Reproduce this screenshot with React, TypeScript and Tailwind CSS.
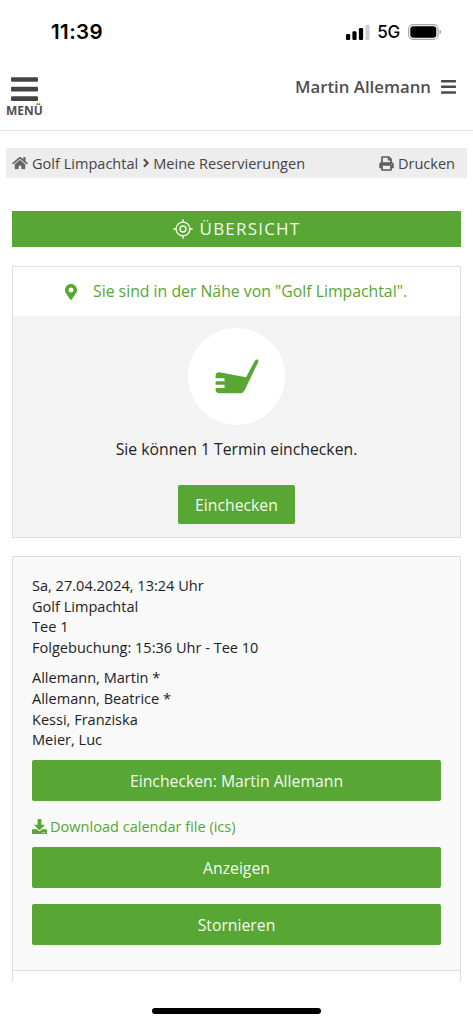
import type { ReactNode } from "react";

function StatusBar() {
  return (
    <div className="flex h-[63px] items-center justify-between pl-[51px] pr-[31px]">
      <span className="font-['Inter'] text-[20.5px] font-semibold leading-6 tracking-[0.4px] text-black">11:39</span>
      <div className="flex items-center">
        <svg className="h-4 w-6" viewBox="0 0 24 16">
          <rect x="0" y="10" width="4.2" height="6" rx="1.2" />
          <rect x="6.4" y="7.2" width="4.2" height="8.8" rx="1.2" />
          <rect x="12.9" y="4" width="4.2" height="12" rx="1.2" />
          <rect x="19.4" y="0.8" width="4.2" height="15.2" rx="1.2" fill="#d0d0d0" />
        </svg>
        <span className="ml-[7px] font-['Inter'] text-[17px] font-medium leading-5 tracking-[-0.2px] text-black">5G</span>
        <svg className="ml-2 h-4 w-[34px]" viewBox="0 0 34 16">
          <rect x="0.7" y="0.6" width="29.4" height="14.8" rx="4.5" fill="none" stroke="#a8a8a8" strokeWidth="1.2" />
          <rect x="2.3" y="2.3" width="26" height="11.4" rx="3" />
          <path d="M31.5 5.6c2.2.7 2.2 4.1 0 4.8z" fill="#a8a8a8" />
        </svg>
      </div>
    </div>
  );
}

function Header() {
  return (
    <header className="flex h-[68px] items-start justify-between border-b border-[#dedede] pl-[6px] pr-[17px] text-[#505050]">
      <div className="flex flex-col items-center pt-[14px]">
        <svg className="h-6 w-[27px]" viewBox="0 0 27 24" fill="#444">
          <rect x="0" y="0.2" width="27" height="4.6" rx="1" />
          <rect x="0" y="9.8" width="27" height="4.6" rx="1" />
          <rect x="0" y="19.3" width="27" height="4.6" rx="1" />
        </svg>
        <span className="mt-[1px] text-[12px] font-bold leading-[18px]">MENÜ</span>
      </div>
      <div className="flex items-center pt-3">
        <span className="text-[16.8px] font-semibold leading-6">Martin Allemann</span>
        <svg className="ml-[10px] h-[14px] w-[15px]" viewBox="0 0 15 14" fill="#4b4b4b">
          <rect x="0" y="0" width="15" height="2.4" rx="0.4" />
          <rect x="0" y="5.6" width="15" height="2.4" rx="0.4" />
          <rect x="0" y="11.3" width="15" height="2.4" rx="0.4" />
        </svg>
      </div>
    </header>
  );
}

function HomeIcon() {
  return (
    <svg className="h-[14px] w-4" viewBox="0 0 576 512" fill="#666">
      <path d="M280.37 148.26L96 300.11V464a16 16 0 0 0 16 16l112.06-.29a16 16 0 0 0 15.92-16V368a16 16 0 0 1 16-16h64a16 16 0 0 1 16 16v95.64a16 16 0 0 0 16 16.05L464 480a16 16 0 0 0 16-16V300L295.67 148.26a12.19 12.19 0 0 0-15.3 0zM571.6 251.47L488 182.56V44.05a12 12 0 0 0-12-12h-56a12 12 0 0 0-12 12v72.61L318.47 43a48 48 0 0 0-61 0L4.34 251.47a12 12 0 0 0-1.6 16.9l25.5 31A12 12 0 0 0 45.15 301l235.22-193.74a12.19 12.19 0 0 1 15.3 0L530.9 301a12 12 0 0 0 16.9-1.6l25.5-31a12 12 0 0 0-1.7-16.93z" />
    </svg>
  );
}

function PrintIcon() {
  return (
    <svg className="h-[15px] w-[15px]" viewBox="0 0 15 15" fill="none" stroke="#5c5c5c">
      <path d="M3 7V1h6.8L12 3.2V7" strokeWidth="1.7" strokeLinejoin="round" />
      <path d="M9.4 1v2.8H12" strokeWidth="1.2" />
      <path d="M0.3 8.3c0-1.2.8-2 2-2h10.4c1.2 0 2 .8 2 2v3.9H12V9.7H3v2.5H.3z" fill="#5c5c5c" stroke="none" />
      <path d="M3 10v4h9v-4" strokeWidth="1.7" strokeLinejoin="round" />
      <circle cx="12.7" cy="8.3" r="0.55" fill="#eee" stroke="none" />
    </svg>
  );
}

function Breadcrumbs() {
  return (
    <nav className="mx-[6px] mt-[17px] flex h-[30px] items-center bg-[#ededed] pl-[6px] pr-3 text-[14.55px] leading-[30px] text-[#444]">
      <HomeIcon />
      <span className="ml-1">Golf Limpachtal</span>
      <svg className="ml-[5px] mr-[4px] h-[10px] w-[6px]" viewBox="0 0 6 10" fill="none" stroke="#555" strokeWidth="2.2">
        <path d="M0.9 1.2L4.7 5L0.9 8.8" />
      </svg>
      <span>Meine Reservierungen</span>
      <span className="ml-auto flex items-center gap-1">
        <PrintIcon />
        <span>Drucken</span>
      </span>
    </nav>
  );
}

function ActionButton({ children, className = "" }: { children: ReactNode; className?: string }) {
  return (
    <button className={`block h-[41px] w-full rounded-[2px] bg-[#58a633] text-[15.75px] leading-[42px] text-[#f4faf1] ${className}`}>
      {children}
    </button>
  );
}

function CheckinCard() {
  return (
    <section className="mx-3 mt-[19px] h-[272px] border border-[#dedede] bg-[#f3f3f3]">
      <div className="flex h-[49px] items-center bg-white pl-[52px] text-[15.8px] text-[#58a633]">
        <svg className="h-4 w-3" viewBox="0 0 384 512" fill="#58a633">
          <path d="M172.268 501.67C26.97 291.031 0 269.413 0 192 0 85.961 85.961 0 192 0s192 85.961 192 192c0 77.413-26.97 99.031-172.268 309.67-9.535 13.774-29.93 13.773-39.464 0zM192 272c44.183 0 80-35.817 80-80s-35.817-80-80-80-80 35.817-80 80 35.817 80 80 80z" />
        </svg>
        <span className="ml-4">Sie sind in der Nähe von "Golf Limpachtal".</span>
      </div>
      <div className="flex flex-col items-center">
        <div className="mt-3 flex h-[97px] w-[97px] items-center justify-center rounded-full bg-white">
          <svg className="h-[35px] w-11" viewBox="0 0 44 35">
            <path d="M4.5 13.2L31 18.3L40 1.5Q41.100 -.1 42.500 .6Q43.900 1.500 43.100 3.200L29.500 31.500Q28 34.200 25.500 34.200H4.500Q.6 34.200 .6 30.500V16.800Q.6 13 4.500 13.200Z" fill="#58a633" />
            <path d="M0 19.300H9.500V22.200H0ZM0 25.800H9.500V29H0Z" fill="white" />
          </svg>
        </div>
        <p className="mt-3 text-[15.75px] leading-6 text-[#222]">Sie können 1 Termin einchecken.</p>
        <button className="mt-6 h-[39px] w-[117px] rounded-[2px] bg-[#58a633] text-[15.75px] leading-[40px] text-[#f4faf1]">Einchecken</button>
      </div>
    </section>
  );
}

function ReservationCard() {
  return (
    <section className="mx-3 mt-[18px] h-[426px] border-x border-t border-[#dedede] bg-white">
      <div className="h-[414px] border-b border-[#dedede] bg-[#f9f9f9] px-[19px] pt-[18px] text-[14.55px] leading-[20.6px] text-[#222]">
        <div>
          <p>Sa, 27.04.2024, 13:24 Uhr</p>
          <p>Golf Limpachtal</p>
          <p>Tee 1</p>
          <p>Folgebuchung: 15:36 Uhr - Tee 10</p>
        </div>
        <div className="mt-[10px]">
          <p>Allemann, Martin *</p>
          <p>Allemann, Beatrice *</p>
          <p>Kessi, Franziska</p>
          <p>Meier, Luc</p>
        </div>
        <ActionButton className="mt-[10px]">Einchecken: Martin Allemann</ActionButton>
        <a className="mt-[15px] flex h-[21px] items-center gap-[3px] text-[#58a633]">
          <svg className="h-[15px] w-[15px]" viewBox="0 0 512 512" fill="#58a633">
            <path d="M216 0h80c13.3 0 24 10.7 24 24v168h87.7c17.8 0 26.7 21.5 14.1 34.1L269.7 378.3c-7.5 7.5-19.8 7.5-27.3 0L90.1 226.1c-12.6-12.6-3.7-34.1 14.1-34.1H192V24c0-13.300 10.700-24 24-24zm296 376v112c0 13.300-10.700 24-24 24H24c-13.300 0-24-10.700-24-24V376c0-13.300 10.700-24 24-24h146.700l49 49c20.100 20.100 52.500 20.100 72.600 0l49-49H488c13.300 0 24 10.700 24 24zm-124 88c0-11-9-20-20-20s-20 9-20 20 9 20 20 20 20-9 20-20zm64 0c0-11-9-20-20-20s-20 9-20 20 9 20 20 20 20-9 20-20z" />
          </svg>
          <span>Download calendar file (ics)</span>
        </a>
        <ActionButton className="mt-[10px]">Anzeigen</ActionButton>
        <ActionButton className="mt-4">Stornieren</ActionButton>
      </div>
    </section>
  );
}

export default function App() {
  return (
    <div className="flex h-[1024px] w-full flex-col bg-white font-['Open_Sans',sans-serif]">
      <StatusBar />
      <Header />
      <Breadcrumbs />
      <div className="mx-3 mt-[33px] flex h-[36px] items-center justify-center bg-[#58a633] text-[17px] tracking-[1.2px] text-[#f4faf1]">
        <svg className="mr-[7px] h-5 w-5" viewBox="0 0 20 20" fill="none" stroke="currentColor" strokeWidth="1.4">
          <circle cx="10" cy="10" r="6.9" />
          <circle cx="10" cy="10" r="3" />
          <path d="M10 0.3V3.100M10 16.900V19.700M0.300 10H3.100M16.900 10H19.700" />
        </svg>
        <span>ÜBERSICHT</span>
      </div>
      <CheckinCard />
      <ReservationCard />
      <div className="mx-auto mt-[26px] h-[6px] w-[169px] rounded-full bg-black" />
    </div>
  );
}
